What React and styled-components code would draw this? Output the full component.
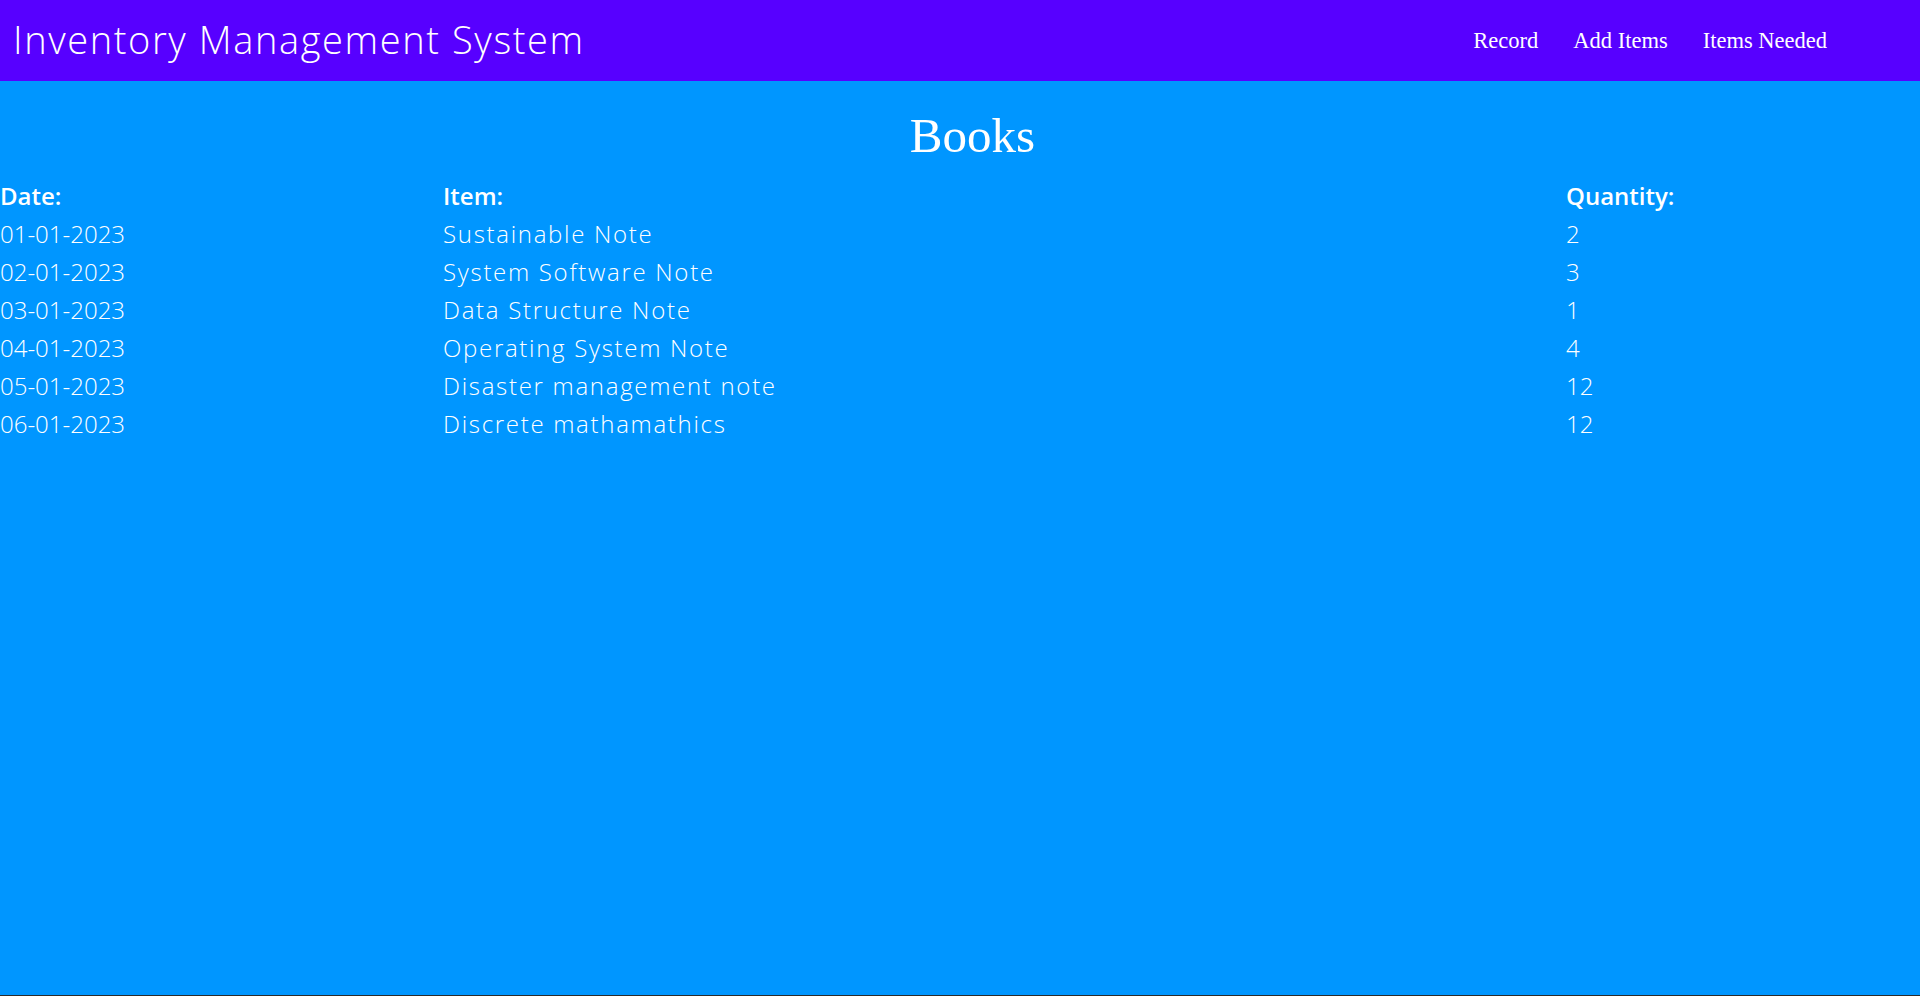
import styled, { createGlobalStyle } from "styled-components";

const GlobalStyle = createGlobalStyle`
  html, body { margin: 0; padding: 0; }
  body { background: #0096ff; font-family: "Liberation Serif", serif; }
  * { box-sizing: border-box; }
`;

const Page = styled.div`
  min-height: 100vh;
  display: flex;
  flex-direction: column;
  border-bottom: 1px solid #2b2b2b;
`;

const NavBar = styled.header`
  height: 81px;
  background: #5700ff;
  display: flex;
  align-items: center;
  justify-content: space-between;
  padding: 0 93px 0 13px;
`;

const Brand = styled.h1`
  margin: 0;
  font-family: "Open Sans", sans-serif;
  font-weight: 300;
  font-size: 38px;
  letter-spacing: 1.6px;
  color: #fff;
  position: relative;
  top: -2px;
`;

const NavLinks = styled.nav`
  display: flex;
  gap: 35px;
`;

const NavLink = styled.a`
  font-family: "Liberation Serif", serif;
  font-size: 22.5px;
  color: #fff;
  text-decoration: none;
  cursor: pointer;
`;

const Main = styled.main`
  flex: 1;
  background: #0096ff;
`;

const Heading = styled.h2`
  margin: 0;
  padding: 25px 0 0 25px;
  text-align: center;
  font-family: "Liberation Serif", serif;
  font-weight: 400;
  font-size: 49px;
  line-height: 60px;
  color: #fff;
`;

const Table = styled.div`
  display: grid;
  grid-template-columns: 443px 1123px 1fr;
  margin-top: 11px;
`;

const Cell = styled.div`
  font-family: "Open Sans", sans-serif;
  font-size: 24px;
  line-height: 38px;
  font-weight: ${p => (p.$head ? 600 : 300)};
  letter-spacing: ${p => (p.$wide ? "1.7px" : "0")};
  color: #fff;
  white-space: nowrap;
`;

const rows = [
  ["01-01-2023", "Sustainable Note", "2"],
  ["02-01-2023", "System Software Note", "3"],
  ["03-01-2023", "Data Structure Note", "1"],
  ["04-01-2023", "Operating System Note", "4"],
  ["05-01-2023", "Disaster management note", "12"],
  ["06-01-2023", "Discrete mathamathics", "12"],
];

export default function App() {
  return (
    <>
      <GlobalStyle />
      <Page>
        <NavBar>
          <Brand>Inventory Management System</Brand>
          <NavLinks>
            <NavLink>Record</NavLink>
            <NavLink>Add Items</NavLink>
            <NavLink>Items Needed</NavLink>
          </NavLinks>
        </NavBar>
        <Main>
          <Heading>Books</Heading>
          <Table>
            <Cell $head>Date:</Cell>
            <Cell $head>Item:</Cell>
            <Cell $head>Quantity:</Cell>
            {rows.map(([date, item, qty]) => (
              <>
                <Cell key={date + "d"}>{date}</Cell>
                <Cell key={date + "i"} $wide>{item}</Cell>
                <Cell key={date + "q"}>{qty}</Cell>
              </>
            ))}
          </Table>
        </Main>
      </Page>
    </>
  );
}
